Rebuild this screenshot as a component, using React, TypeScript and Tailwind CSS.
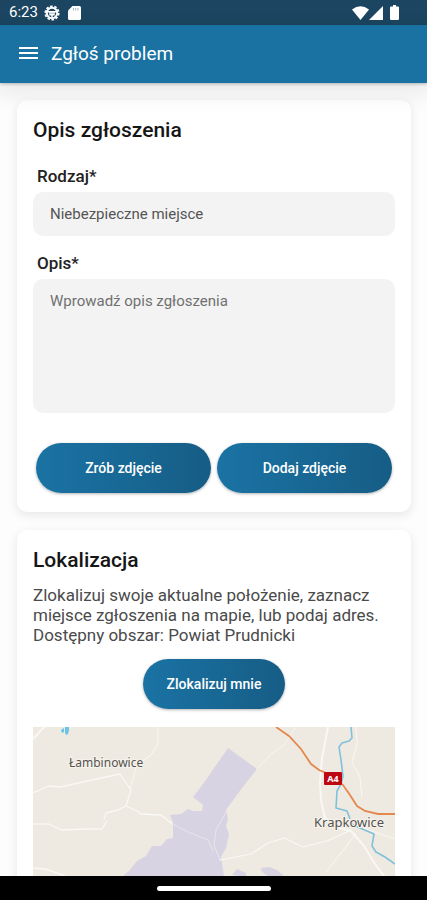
import type { ReactNode } from "react";

function StatusBar() {
  return (
    <div className="flex h-[25px] shrink-0 items-center justify-between bg-[#1b4560] pr-7 pl-[9px] text-white">
      <div className="flex items-center gap-[6px]">
        <span className="text-[15px] leading-none">6:23</span>
        <svg width="16" height="16" viewBox="0 0 16 16" fill="none" stroke="currentColor">
          <circle cx="8" cy="8" r="5.2" strokeWidth="2" />
          <circle cx="8" cy="8" r="6.8" strokeWidth="1.6" strokeDasharray="2.6 1.67" />
          <path d="M3.500 6.800h9M8 7v5.500M6 7.500v2.200h4V7.500" strokeWidth="1.5" />
        </svg>
        <svg className="ml-[2px]" width="13" height="14" viewBox="0 0 13 14">
          <path d="M4.500 0H11.500Q13 0 13 1.500V12.500Q13 14 11.500 14H1.500Q0 14 0 12.500V4.500Z" fill="currentColor" />
          <path d="M5.500 2v2.500M7.700 2v2.500M9.900 2v2.500" stroke="#1b4560" strokeWidth="0.4" />
        </svg>
      </div>
      <div className="flex items-center">
        <svg width="17" height="14" viewBox="0 0 17 14" fill="currentColor">
          <path d="M0 3.600Q8.500-3.200 17 3.600L8.500 14Z" />
        </svg>
        <svg width="14" height="14" viewBox="0 0 14 14" fill="currentColor">
          <path d="M14 0V14H0Z" />
        </svg>
        <svg className="ml-[7px]" width="9" height="15" viewBox="0 0 9 15" fill="currentColor">
          <path d="M3 0H6V1.500H8Q9 1.500 9 2.500V14Q9 15 8 15H1Q0 15 0 14V2.500Q0 1.500 1 1.500H3Z" />
        </svg>
      </div>
    </div>
  );
}

function Header() {
  return (
    <header className="z-10 flex h-[58px] shrink-0 items-center gap-3 bg-[#1a72a2] px-[18px] text-white shadow-[0_8px_20px_4px_rgba(40,20,20,0.08),0_1px_3px_rgba(0,0,0,0.25)]">
      <button type="button" aria-label="Menu">
        <svg width="21" height="14" viewBox="0 0 21 14" fill="currentColor">
          <path d="M1 0h19v2H1zM1 5h19v2H1zM1 10h19v2H1z" />
        </svg>
      </button>
      <h1 className="text-[19px] leading-6">Zgłoś problem</h1>
    </header>
  );
}

function Card({ title, children }: { title: string; children: ReactNode }) {
  return (
    <section className="rounded-[10px] bg-white p-4 shadow-[0_3px_10px_1px_rgba(0,0,0,0.08)]">
      <h2 className="text-[21px] leading-7 font-medium text-[#161616]">{title}</h2>
      {children}
    </section>
  );
}

function PillButton({ className = "", children }: { className?: string; children: ReactNode }) {
  return (
    <button
      type="button"
      className={`h-[50px] rounded-full bg-linear-to-r from-[#1a73a4] to-[#165d86] text-sm font-medium text-white shadow-[0_1px_3px_rgba(0,0,0,0.3)] ${className}`}
    >
      {children}
    </button>
  );
}

function ReportMap() {
  return (
    <svg
      className="mt-[18px] h-[220px] w-full"
      viewBox="0 0 362 220"
      preserveAspectRatio="xMidYMin slice"
      role="img"
      aria-label="Mapa"
    >
      <rect width="362" height="220" fill="#eeeae2" />
      <path
        d="M195 21L224 42 209 61 193 83 195 92 193 99 196 107 193 121 188 130 191 149V220H60L90 149 96 144 104 134 113 129 119 119 128 119 134 112 140 111 140 95 137 88 148 87 155 82 160 84 169 84 170 78 160 70 170 57Z"
        fill="#d7d3e3"
      />
      <path d="M228 141l8-1 8 3 6 5v6h-8l-13-9zM199 148l5-6 9 4v4z" fill="#d7d3e3" />
      <g fill="none" stroke="#faf8f4" strokeLinecap="round" strokeLinejoin="round">
        <path d="M0 12L11 0" strokeWidth="2" />
        <path d="M0 66L16 59 27 60 50 55 87 47 98 63 93 79 104 84 108 87 128 88 138 96" strokeWidth="1.3" />
        <path d="M125 0V17L118 28 104 38 97 62" strokeWidth="1" />
        <path d="M93 79L85 83 73 86 71 92M0 97H16L28 103 53 102 69 102 74 94" strokeWidth="1.3" />
        <path d="M0 141L12 142 30 148 40 155" strokeWidth="1.5" />
        <path d="M138 96L155 105 175 113 180 124" strokeWidth="0.8" opacity="0.6" />
        <path d="M193 85L183 103 181 118 187 133" strokeWidth="0.8" opacity="0.6" />
        <path d="M187 133L218 127 235 116 251 111 270 120 294 114 318 103" strokeWidth="1.2" />
        <path d="M224 42L237 28 250 19 263 0" strokeWidth="0.8" />
        <path d="M295 0L289 31 287 56 288 73 292 91 303 100 318 104 331 119 342 137 354 153" strokeWidth="2" />
        <path d="M323 0L324 17 319 35 327 50 329 70M323 106L313 120 293 145M330 101L362 112" strokeWidth="1" />
      </g>
      <path
        d="M318 0L319 11 316 14 309 16 306 20 308 33 310 49 308 57 304 64 303 81 314 84 317 92 320 98 341 107 339 119 343 125 352 130 362 137"
        fill="none"
        stroke="#80c1da"
        strokeWidth="1.6"
        strokeLinejoin="round"
      />
      <path d="M28 3l3-2v4l-2 1zM32 0h4v3l-1 4-2 1-1-3z" fill="#68c4e6" />
      <path
        d="M243 0L256 9 268 22 278 37 286 43 298 48 310 58 317 68 324 79 332 84 345 87H362"
        fill="none"
        stroke="#e4884d"
        strokeWidth="1.8"
      />
      <rect x="291" y="45" width="18" height="13" rx="1" fill="#bd0711" />
      <text x="300" y="55" textAnchor="middle" fontSize="9" fontWeight="700" fill="#fff" className="font-['Noto_Sans',sans-serif]">
        A4
      </text>
      <g fill="#55524e" stroke="#f6f3ed" strokeWidth="2" paintOrder="stroke" className="font-['Noto_Sans',sans-serif]">
        <text x="36" y="40" fontSize="12">Łambinowice</text>
        <text x="281" y="100" fontSize="13">Krapkowice</text>
      </g>
    </svg>
  );
}

export default function App() {
  return (
    <div className="flex h-screen flex-col bg-[#fdfdfd] font-[Roboto,sans-serif]">
      <StatusBar />
      <Header />
      <main className="flex min-h-0 flex-1 flex-col gap-[18px] overflow-y-auto pt-[17px] pr-4 pl-[17px] [scrollbar-width:none] *:shrink-0">
        <Card title="Opis zgłoszenia">
          <form>
            <label htmlFor="kind" className="mt-5 ml-1 block text-[17px] leading-6 font-medium text-[#222]">
              Rodzaj*
            </label>
            <select
              id="kind"
              className="mt-1 block h-11 w-full appearance-none rounded-[10px] bg-[#f3f3f3] px-[17px] text-[15px] text-[#555]"
            >
              <option>Niebezpieczne miejsce</option>
            </select>
            <label htmlFor="description" className="mt-[15px] ml-1 block text-[17px] leading-6 font-medium text-[#222]">
              Opis*
            </label>
            <textarea
              id="description"
              placeholder="Wprowadź opis zgłoszenia"
              className="mt-1 block h-[134px] w-full resize-none rounded-[10px] bg-[#f3f3f3] px-[17px] py-3 text-[15px] leading-5 text-[#555] placeholder:text-[#707070]"
            />
            <div className="mt-[30px] mb-[3px] flex gap-[6px] px-[3px]">
              <PillButton className="flex-1">Zrób zdjęcie</PillButton>
              <PillButton className="flex-1">Dodaj zdjęcie</PillButton>
            </div>
          </form>
        </Card>
        <Card title="Lokalizacja">
          <p className="mt-[11px] text-[17px] leading-5 text-[#4a4a4a]">
            Zlokalizuj swoje aktualne położenie, zaznacz miejsce zgłoszenia na mapie, lub podaj adres. Dostępny obszar:
            Powiat Prudnicki
          </p>
          <div className="mt-[14px] flex justify-center">
            <PillButton className="px-6">Zlokalizuj mnie</PillButton>
          </div>
          <ReportMap />
        </Card>
      </main>
      <div className="flex h-6 shrink-0 items-center justify-center bg-black">
        <div className="h-[5px] w-[114px] rounded-full bg-white" />
      </div>
    </div>
  );
}
